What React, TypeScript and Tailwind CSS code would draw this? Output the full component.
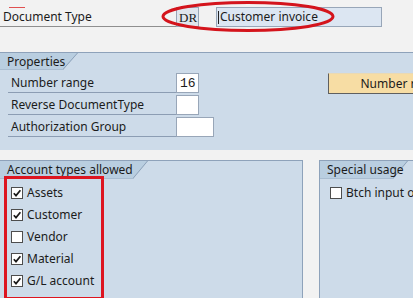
import React from "react";

function Tab({ label, width, h = 17 }: { label: string; width: number; h?: number }) {
  return (
    <div className="relative" style={{ width, height: h }}>
      <svg className="absolute inset-0" width={width} height={h}>
        <polygon points={`0,0 ${width},0 ${width - 15},${h} 0,${h}`} fill="#b9cee0" />
        <line x1={width - 0.5} y1={0} x2={width - 15.5} y2={h} stroke="#8ea2ba" strokeWidth={1} />
        <line x1={0} y1={h - 0.5} x2={width - 15} y2={h - 0.5} stroke="#a9bdd1" strokeWidth={1} />
      </svg>
      <span className="absolute left-[7px] top-0 leading-[17px] whitespace-nowrap">{label}</span>
    </div>
  );
}

function Check({ checked, label }: { checked: boolean; label: string }) {
  return (
    <div className="h-[22px] flex items-center gap-[4px] whitespace-nowrap">
      <span className="w-[12px] h-[12px] bg-white border border-[#4d4d4d] flex items-center justify-center">
        {checked && (
          <svg width="10" height="10" viewBox="0 0 10 10">
            <path d="M1.8 5.2 L4 7.6 L8.4 2.2" fill="none" stroke="#1a1a1a" strokeWidth="1.7" />
          </svg>
        )}
      </span>
      <span>{label}</span>
    </div>
  );
}

export default function App() {
  return (
    <div className="relative w-[413px] h-[298px] overflow-hidden bg-[#f2f2f2] text-[12px] text-[#1b1b1b] font-['Noto_Sans',sans-serif] leading-none">
      {/* Header row */}
      <div className="h-[52px] pt-[7px] flex items-start">
        <div className="w-[176px] h-[20px] border-b border-[#8f8f8f] pl-[3px] flex items-center">Document Type</div>
        <div className="w-[23px] h-[20px] border border-[#98a6b8] bg-[#dfe5ed] flex items-center pl-[2px] font-['Liberation_Serif',serif] text-[13px]">DR</div>
        <div className="ml-[17px] w-[166px] h-[20px] border border-[#98a6b8] bg-[#dce6f2] flex items-center pl-[1px] text-[12px]">
          <span className="w-[1px] h-[13px] bg-[#222] mr-[1px]" />
          Customer invoice
        </div>
      </div>

      {/* Properties panel */}
      <div className="h-[98px] border-t border-[#8ea2ba] bg-[#cddbe9]">
        <Tab label="Properties" width={78} />
        <div className="mt-[3px] flex items-start">
          <div className="pl-[8px] flex flex-col">
            {[
              { l: "Number range", w: 23, v: "16" },
              { l: "Reverse DocumentType", w: 23, v: "" },
              { l: "Authorization Group", w: 38, v: "" },
            ].map((r) => (
              <div key={r.l} className="h-[22px] flex items-start">
                <div className="w-[168px] h-[20px] border-b border-[#8c9db3] pl-[3px] flex items-center whitespace-nowrap">{r.l}</div>
                <div
                  className="h-[20px] border border-[#98a6b8] bg-white flex items-center pl-[3px] font-['Liberation_Mono',monospace] text-[13px]"
                  style={{ width: r.w }}
                >
                  {r.v}
                </div>
              </div>
            ))}
          </div>
          <div className="ml-[114px] shrink-0 w-[148px] h-[21px] bg-[#f7dda4] border border-[#e9d9b4] border-l-[#5f5f5f] border-b-[#5f5f5f] flex items-center justify-center whitespace-nowrap">
            Number range
          </div>
        </div>
      </div>

      {/* Bottom panels */}
      <div className="mt-[10px] flex">
        <div className="w-[303px] h-[138px] shrink-0 border-t border-r border-[#8ea2ba] bg-[#cddbe9]">
          <Tab label="Account types allowed" width={148} h={18} />
          <div className="mt-[3px] pl-[11px] flex flex-col">
            <Check checked label="Assets" />
            <Check checked label="Customer" />
            <Check checked={false} label="Vendor" />
            <Check checked label="Material" />
            <Check checked label="G/L account" />
          </div>
        </div>
        <div className="ml-[16px] flex-1 h-[138px] border-t border-l border-[#8ea2ba] bg-[#cddbe9]">
          <Tab label="Special usage" width={88} h={18} />
          <div className="mt-[3px] pl-[10px]">
            <Check checked={false} label="Btch input only" />
          </div>
        </div>
      </div>

      {/* Annotations */}
      <div className="absolute left-[9px] top-[7px] w-[16px] h-[1px] bg-[#e05050]" />
      <svg className="absolute left-0 top-0 pointer-events-none" width="413" height="298">
        <ellipse cx="248" cy="16.5" rx="85" ry="14" fill="none" stroke="#d4141c" strokeWidth="3" />
      </svg>
      <div className="absolute left-[4px] top-[176px] w-[100px] h-[124px] border-[3px] border-[#dd1520]" />
    </div>
  );
}
